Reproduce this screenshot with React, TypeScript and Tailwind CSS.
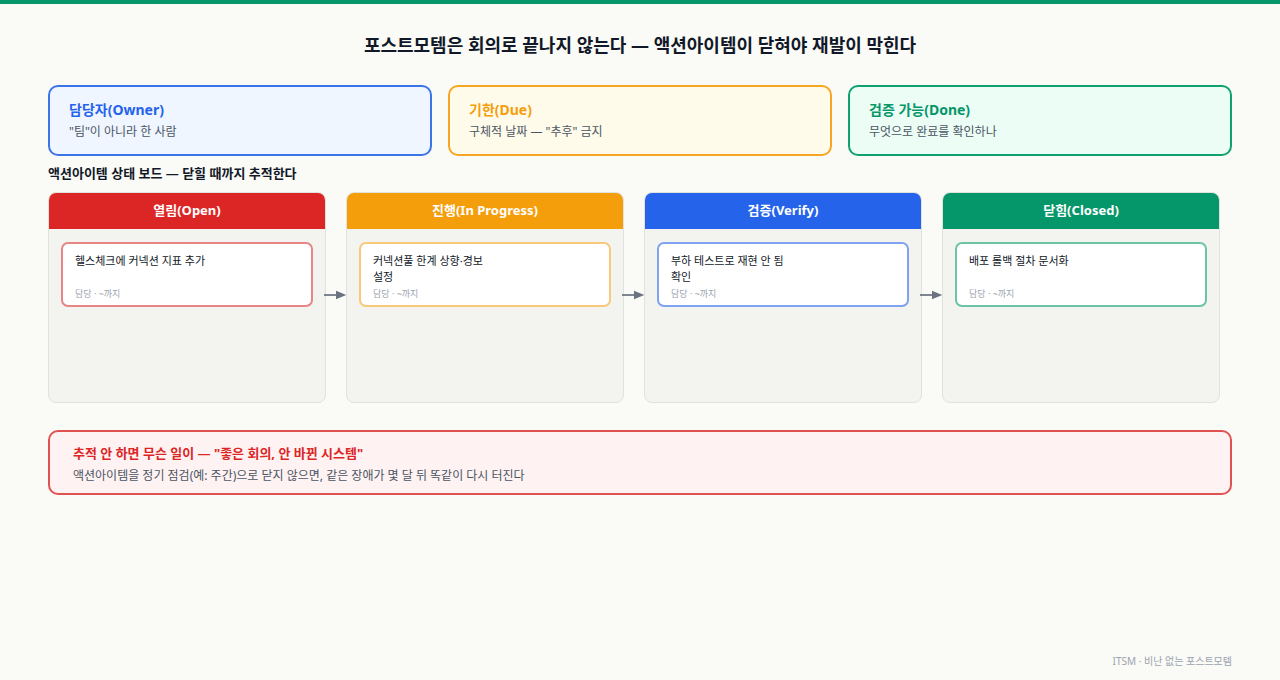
import React from 'react';

const TOP = [
  { t: '담당자(Owner)', d: '"팀"이 아니라 한 사람', box: 'border-[#3b73e8] bg-[#eff6ff]', tc: 'text-[#2563eb]' },
  { t: '기한(Due)', d: '구체적 날짜 — "추후" 금지', box: 'border-[#f5a623] bg-[#fffbeb]', tc: 'text-[#f59e0b]' },
  { t: '검증 가능(Done)', d: '무엇으로 완료를 확인하나', box: 'border-[#10a170] bg-[#ecfdf5]', tc: 'text-[#059669]' },
];

const COLS = [
  { h: '열림(Open)', hb: 'bg-[#dc2626]', cb: 'border-[#e88585]', item: '헬스체크에 커넥션 지표 추가' },
  { h: '진행(In Progress)', hb: 'bg-[#f59e0b]', cb: 'border-[#f8c97a]', item: '커넥션풀 한계 상향·경보\n설정' },
  { h: '검증(Verify)', hb: 'bg-[#2563eb]', cb: 'border-[#7fa3f0]', item: '부하 테스트로 재현 안 됨\n확인' },
  { h: '닫힘(Closed)', hb: 'bg-[#059669]', cb: 'border-[#6cc4a6]', item: '배포 롤백 절차 문서화' },
];

const Arrow = () => (
  <div className="w-6 shrink-0 flex items-start pt-[97px] -mx-[2px]">
    <svg width="28" height="12" viewBox="0 0 28 12">
      <line x1="0" y1="6" x2="16" y2="6" stroke="#6b7280" strokeWidth="2" />
      <polygon points="14,1 26,6 14,11" fill="#6b7280" />
    </svg>
  </div>
);

export default function App() {
  return (
    <div className="w-[1280px] h-[680px] bg-[#fafaf7] border-t-4 border-[#059669] flex flex-col text-[#1f2937]" style={{ fontFamily: '"Noto Sans", "Noto Sans CJK KR", sans-serif' }}>
      <h1 className="text-center text-[18px] font-bold mt-[27px] leading-[28px] text-[#111827]">포스트모템은 회의로 끝나지 않는다 — 액션아이템이 닫혀야 재발이 막힌다</h1>
      <div className="px-12 mt-[26px] grid grid-cols-3 gap-4">
        {TOP.map(c => (
          <div key={c.t} className={`h-[71px] rounded-[10px] border-2 px-[19px] pt-[13px] ${c.box}`}>
            <div className={`text-[14px] font-bold leading-5 ${c.tc}`}>{c.t}</div>
            <div className="text-[12px] text-[#4b5563] mt-[3px]">{c.d}</div>
          </div>
        ))}
      </div>
      <div className="px-12 mt-[7px] text-[13px] font-bold leading-5 text-[#111827]">액션아이템 상태 보드 — 닫힐 때까지 추적한다</div>
      <div className="px-12 mt-[9px] flex">
        {COLS.map((c, i) => (
          <React.Fragment key={c.h}>
            {i > 0 && <Arrow />}
            <div className="w-[278px] h-[211px] rounded-[8px] bg-[#f3f3ef] border border-[#e2e2dd] overflow-hidden flex flex-col">
              <div className={`h-9 shrink-0 flex items-center justify-center text-white text-[13px] font-bold ${c.hb}`}>{c.h}</div>
              <div className="p-3 pt-[13px]">
                <div className={`h-[65px] rounded-[7px] border-2 bg-white px-3 pt-[9px] relative ${c.cb}`}>
                  <div className="text-[11px] leading-4 whitespace-pre-line text-[#111827]">{c.item}</div>
                  <div className="absolute left-3 bottom-[5px] text-[9px] text-[#9ca3af]">담당 · ~까지</div>
                </div>
              </div>
            </div>
          </React.Fragment>
        ))}
      </div>
      <div className="mx-12 mt-[27px] h-[65px] rounded-[10px] border-2 border-[#e05252] bg-[#fef2f2] px-[23px] pt-[11px]">
        <div className="text-[13px] font-bold text-[#dc2626] leading-5">추적 안 하면 무슨 일이 — "좋은 회의, 안 바뀐 시스템"</div>
        <div className="text-[12px] text-[#4b5563] mt-[4px]">액션아이템을 정기 점검(예: 주간)으로 닫지 않으면, 같은 장애가 몇 달 뒤 똑같이 다시 터진다</div>
      </div>
      <div className="mt-auto mb-[11px] px-12 text-right text-[10px] text-[#9ca3af]">ITSM · 비난 없는 포스트모템</div>
    </div>
  );
}
